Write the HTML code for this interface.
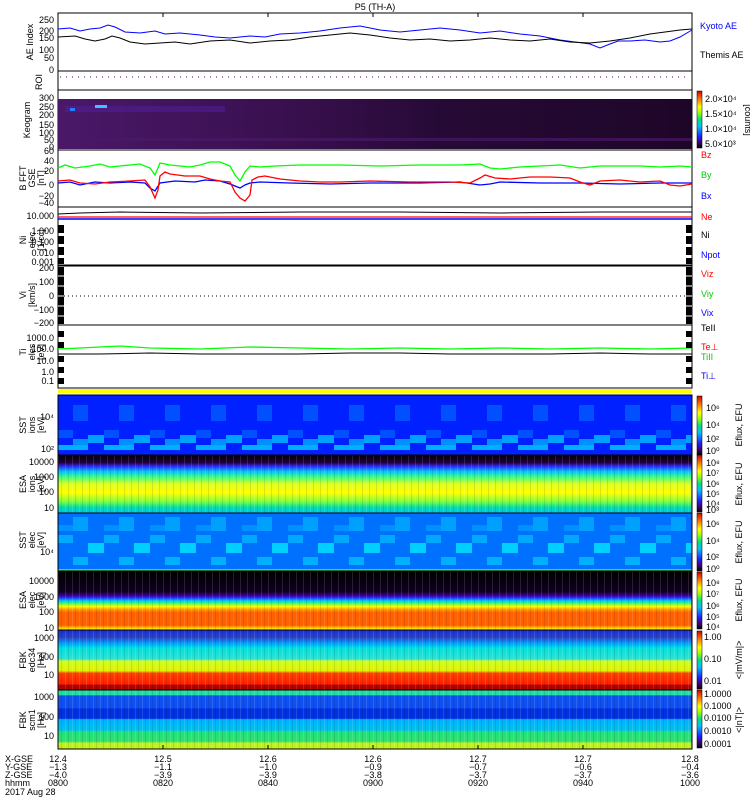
<!DOCTYPE html>
<html><head><meta charset="utf-8"><style>
html,body{margin:0;padding:0;background:#fff;}
svg{display:block;font-family:"Liberation Sans",sans-serif;}
text{font-size:9px;}
</style></head><body>
<svg width="750" height="800" viewBox="0 0 750 800" xmlns="http://www.w3.org/2000/svg">
<defs>
<linearGradient id="rb" x1="0" y1="1" x2="0" y2="0">
<stop offset="0" stop-color="#000"/><stop offset="0.08" stop-color="#400060"/><stop offset="0.2" stop-color="#2020ff"/><stop offset="0.38" stop-color="#00c0ff"/><stop offset="0.5" stop-color="#00e080"/><stop offset="0.62" stop-color="#a0ff00"/><stop offset="0.72" stop-color="#ffff00"/><stop offset="0.85" stop-color="#ff8000"/><stop offset="1" stop-color="#d00000"/>
</linearGradient>
<linearGradient id="esai" x1="0" y1="0" x2="0" y2="1">
<stop offset="0" stop-color="#000"/><stop offset="0.13" stop-color="#200040"/><stop offset="0.2" stop-color="#3030ff"/><stop offset="0.28" stop-color="#00c0ff"/><stop offset="0.38" stop-color="#40ff80"/><stop offset="0.5" stop-color="#e0ff20"/><stop offset="0.65" stop-color="#ffff00"/><stop offset="0.8" stop-color="#80ff40"/><stop offset="0.9" stop-color="#00e0a0"/><stop offset="1" stop-color="#00c0ff"/>
</linearGradient>
<linearGradient id="esae" x1="0" y1="0" x2="0" y2="1">
<stop offset="0" stop-color="#000"/><stop offset="0.35" stop-color="#100020"/><stop offset="0.42" stop-color="#4000a0"/><stop offset="0.46" stop-color="#2040ff"/><stop offset="0.5" stop-color="#00c0ff"/><stop offset="0.55" stop-color="#40ff60"/><stop offset="0.6" stop-color="#ffff00"/><stop offset="0.65" stop-color="#ffa000"/><stop offset="0.7" stop-color="#ff6000"/><stop offset="0.92" stop-color="#ff6000"/><stop offset="0.96" stop-color="#ffc000"/><stop offset="1" stop-color="#ffff00"/>
</linearGradient>
<linearGradient id="fbk1" x1="0" y1="0" x2="0" y2="1">
<stop offset="0" stop-color="#1030e0"/><stop offset="0.12" stop-color="#3040c0"/><stop offset="0.22" stop-color="#00a0ff"/><stop offset="0.3" stop-color="#00e0e0"/><stop offset="0.48" stop-color="#30e0d0"/><stop offset="0.52" stop-color="#d0ff20"/><stop offset="0.68" stop-color="#e0f000"/><stop offset="0.72" stop-color="#ff4000"/><stop offset="0.9" stop-color="#ff2000"/><stop offset="0.92" stop-color="#b00000"/><stop offset="1" stop-color="#b00000"/>
</linearGradient>
<linearGradient id="fbk2" x1="0" y1="0" x2="0" y2="1">
<stop offset="0" stop-color="#20e0a0"/><stop offset="0.08" stop-color="#20e0a0"/><stop offset="0.1" stop-color="#1050f0"/><stop offset="0.3" stop-color="#1050f0"/><stop offset="0.32" stop-color="#0030e0"/><stop offset="0.48" stop-color="#0030e0"/><stop offset="0.5" stop-color="#00b0ff"/><stop offset="0.68" stop-color="#00c0f0"/><stop offset="0.7" stop-color="#20e080"/><stop offset="0.87" stop-color="#30e070"/><stop offset="0.9" stop-color="#c0f020"/><stop offset="1" stop-color="#c0f020"/>
</linearGradient>
<linearGradient id="keo" x1="0" y1="0" x2="1" y2="0">
<stop offset="0" stop-color="#4a1868"/><stop offset="0.35" stop-color="#3a1050"/><stop offset="0.6" stop-color="#260a36"/><stop offset="1" stop-color="#1e0628"/>
</linearGradient>
<pattern id="stripes" width="7" height="60" patternUnits="userSpaceOnUse">
<rect x="2" y="0" width="1" height="60" fill="#fff" opacity="0.12"/><rect x="5" y="0" width="1" height="60" fill="#000" opacity="0.1"/>
</pattern>
<pattern id="sst1" width="46" height="60" patternUnits="userSpaceOnUse" x="58" y="395">
<rect width="46" height="60" fill="#0020ff"/>
<rect x="15" y="10" width="15" height="16" fill="#0050ff"/><rect x="0" y="35" width="15" height="8" fill="#0050ff"/><rect x="30" y="40" width="16" height="8" fill="#00a0ff"/><rect x="15" y="44" width="15" height="6" fill="#0090ff"/><rect x="0" y="50" width="30" height="5" fill="#00b0ff"/>
</pattern>
<pattern id="sst2" width="46" height="58" patternUnits="userSpaceOnUse" x="58" y="513">
<rect width="46" height="58" fill="#0070ff"/>
<rect x="15" y="4" width="15" height="14" fill="#00a0ff"/><rect x="0" y="22" width="15" height="8" fill="#00a8ff"/><rect x="30" y="30" width="16" height="10" fill="#00d0ff"/><rect x="15" y="44" width="15" height="8" fill="#00b0ff"/><rect x="0" y="12" width="15" height="6" fill="#0090ff"/>
</pattern>
</defs>

<text x="375" y="10" text-anchor="middle" font-size="10">P5 (TH-A)</text>

<!-- AE panel -->
<rect x="58" y="13" width="634" height="58" fill="#fff" stroke="#000"/>
<polyline fill="none" stroke="#00f" points="58,29 70,28 80,31 90,29 100,28 108,25 115,27 125,32 140,33 155,31 165,34 180,33 200,35 215,37 230,38 250,36 265,37 280,34 300,33 320,31 340,28 360,26 380,30 400,32 420,30 440,28 460,30 480,33 500,31 520,34 540,36 560,40 575,42 590,44 600,48 610,44 618,41 630,41 645,40 660,42 670,41 680,37 692,30"/>
<polyline fill="none" stroke="#000" points="58,37 75,36 85,39 95,41 105,39 112,36 120,38 130,42 145,44 160,43 175,42 190,44 210,41 230,40 250,43 270,41 290,40 310,37 330,35 350,33 370,35 390,38 410,40 430,39 450,41 470,40 490,38 510,40 530,41 550,39 570,42 590,43 610,41 630,38 650,34 665,32 680,30 692,29"/>
<g font-size="9">
<text x="54" y="23" text-anchor="end">250</text><text x="54" y="34" text-anchor="end">200</text><text x="54" y="41" text-anchor="end">150</text><text x="54" y="53" text-anchor="end">100</text><text x="54" y="61" text-anchor="end">50</text><text x="54" y="73" text-anchor="end">0</text>
<text transform="translate(33,42) rotate(-90)" text-anchor="middle">AE Index</text>
</g>
<text x="700" y="29" fill="#00f">Kyoto AE</text><text x="700" y="58">Themis AE</text>

<!-- ROI -->
<rect x="58" y="71" width="634" height="19" fill="#fff" stroke="#000"/>
<line x1="60" y1="77" x2="690" y2="77" stroke="#400060" stroke-dasharray="1,5"/>
<text transform="translate(42,82) rotate(-90)" text-anchor="middle">ROI</text>

<!-- Keogram -->
<rect x="58" y="90" width="634" height="60" fill="#fff" stroke="#000"/>
<rect x="58" y="99" width="634" height="50" fill="url(#keo)"/>
<rect x="65" y="106" width="160" height="6" fill="#5020a0" opacity="0.5"/>
<rect x="95" y="105" width="12" height="3" fill="#40c0ff"/>
<rect x="70" y="108" width="5" height="3" fill="#2080ff"/>
<rect x="58" y="138" width="634" height="3" fill="#4a1868" opacity="0.7"/>
<text x="54" y="101" text-anchor="end">300</text><text x="54" y="110" text-anchor="end">250</text><text x="54" y="118" text-anchor="end">200</text><text x="54" y="128" text-anchor="end">150</text><text x="54" y="136" text-anchor="end">100</text><text x="54" y="143" text-anchor="end">50</text><text x="54" y="150" text-anchor="end">0</text>
<text transform="translate(30,120) rotate(-90)" text-anchor="middle">Keogram</text>
<rect x="697" y="91" width="5" height="57" fill="url(#rb)" stroke="#000" stroke-width="0.5"/>
<g font-size="8"><text x="705" y="102">2.0×10⁴</text><text x="705" y="117">1.5×10⁴</text><text x="705" y="132">1.0×10⁴</text><text x="705" y="147">5.0×10³</text></g>
<text transform="translate(745,120) rotate(90)" text-anchor="middle" font-size="8">[counts]</text>

<!-- B FFT -->
<rect x="58" y="150" width="634" height="57" fill="#fff" stroke="#000"/>
<polyline fill="none" stroke="#0f0" stroke-width="1.3" points="58,168 65,165 75,168 90,166 100,164 110,167 120,166 130,165 140,164 150,168 155,175 160,163 170,165 190,167 200,165 210,162 220,162 230,166 235,175 240,181 245,172 250,166 260,167 275,166 300,165 340,165 380,166 420,165 460,165 480,164 490,168 500,169 520,167 540,166 560,165 580,168 600,166 620,166 640,166 660,167 680,166 692,167"/>
<polyline fill="none" stroke="#00f" stroke-width="1.3" points="58,183 70,182 80,185 95,182 110,183 130,182 145,183 150,188 155,191 160,183 175,181 195,182 205,180 220,181 230,184 240,188 245,185 250,183 260,182 290,183 330,184 370,183 420,183 460,182 480,185 490,184 500,182 540,183 580,183 620,184 660,183 692,183"/>
<polyline fill="none" stroke="#f00" stroke-width="1.3" points="58,181 70,180 80,183 95,184 110,182 130,181 145,180 150,187 155,198 158,190 160,176 165,172 170,174 185,176 200,176 210,179 220,181 230,182 235,192 240,198 245,201 250,195 252,180 258,177 265,176 280,179 300,181 320,182 340,182 370,181 410,182 450,182 470,183 480,178 485,175 495,178 510,179 530,177 550,177 570,178 580,182 590,185 600,181 620,180 640,182 660,181 670,185 680,186 692,184"/>
<g font-size="9"><text x="54" y="154" text-anchor="end">60</text><text x="54" y="164" text-anchor="end">40</text><text x="54" y="174" text-anchor="end">20</text><text x="54" y="188" text-anchor="end">0</text><text x="54" y="199" text-anchor="end">−20</text><text x="54" y="206" text-anchor="end">−40</text></g>
<text transform="translate(26,178) rotate(-90)" text-anchor="middle" font-size="8">B FFT</text>
<text transform="translate(35,178) rotate(-90)" text-anchor="middle" font-size="8">GSE</text>
<text transform="translate(44,178) rotate(-90)" text-anchor="middle" font-size="8">[nT]</text>
<text x="701" y="158" fill="#f00">Bz</text><text x="701" y="178" fill="#0c0">By</text><text x="701" y="199" fill="#00f">Bx</text>

<!-- Ni -->
<rect x="58" y="207" width="634" height="58" fill="#fff" stroke="#000"/>
<polyline fill="none" stroke="#000" points="58,214 80,213 120,212 200,213 300,212 400,212 500,213 600,212 692,212"/>
<line x1="58" y1="219" x2="692" y2="219" stroke="#00f" stroke-width="1.5"/>
<line x1="58" y1="217" x2="692" y2="217" stroke="#f00" stroke-width="1.3"/>
<g font-size="9"><text x="54" y="219" text-anchor="end">10.000</text><text x="54" y="234" text-anchor="end">1.000</text><text x="54" y="245" text-anchor="end">0.100</text><text x="54" y="256" text-anchor="end">0.010</text><text x="54" y="265" text-anchor="end">0.001</text></g>
<text transform="translate(26,240) rotate(-90)" text-anchor="middle" font-size="8">Ni</text>
<text transform="translate(35,240) rotate(-90)" text-anchor="middle" font-size="8">elec</text>
<text transform="translate(44,240) rotate(-90)" text-anchor="middle" font-size="8">[1/cc]</text>
<text x="701" y="220" fill="#f00">Ne</text><text x="701" y="238">Ni</text><text x="701" y="258" fill="#00f">Npot</text>

<!-- Vi -->
<rect x="58" y="266" width="634" height="59" fill="#fff" stroke="#000"/>
<line x1="60" y1="296" x2="690" y2="296" stroke="#000" stroke-dasharray="1,3"/>
<g font-size="9"><text x="54" y="271" text-anchor="end">200</text><text x="54" y="285" text-anchor="end">100</text><text x="54" y="299" text-anchor="end">0</text><text x="54" y="313" text-anchor="end">−100</text><text x="54" y="326" text-anchor="end">−200</text></g>
<text transform="translate(26,295) rotate(-90)" text-anchor="middle" font-size="8">Vi</text>
<text transform="translate(35,295) rotate(-90)" text-anchor="middle" font-size="8">[km/s]</text>
<text x="701" y="277" fill="#f00">Viz</text><text x="701" y="297" fill="#0c0">Viy</text><text x="701" y="316" fill="#00f">Vix</text>

<!-- Ti -->
<rect x="58" y="325" width="634" height="63" fill="#fff" stroke="#000"/>
<polyline fill="none" stroke="#0f0" stroke-width="1.3" points="58,349 80,348 100,347 120,346 150,348 200,349 250,347 300,348 350,349 400,348 450,349 500,348 550,349 600,348 650,349 692,348"/>
<polyline fill="none" stroke="#000" points="58,354 100,354 150,353 200,354 250,354 300,354 350,353 400,353 450,354 500,354 550,354 600,353 650,354 692,354"/>
<g font-size="9"><text x="54" y="341" text-anchor="end">1000.0</text><text x="54" y="352" text-anchor="end">100.0</text><text x="54" y="364" text-anchor="end">10.0</text><text x="54" y="375" text-anchor="end">1.0</text><text x="54" y="384" text-anchor="end">0.1</text></g>
<text transform="translate(26,352) rotate(-90)" text-anchor="middle" font-size="8">Ti</text>
<text transform="translate(35,352) rotate(-90)" text-anchor="middle" font-size="8">eles</text>
<text transform="translate(44,352) rotate(-90)" text-anchor="middle" font-size="8">[eV]</text>
<text x="701" y="331">TeII</text><text x="701" y="350" fill="#f00">Te⊥</text><text x="701" y="360" fill="#0c0">TiII</text><text x="701" y="379" fill="#00f">Ti⊥</text>

<!-- axis tick blocks (left/right) -->
<g fill="#000">
<rect x="58" y="225" width="6" height="8"/><rect x="58" y="236" width="6" height="8"/><rect x="58" y="247" width="6" height="8"/><rect x="58" y="258" width="6" height="6"/>
<rect x="686" y="225" width="6" height="8"/><rect x="686" y="236" width="6" height="8"/><rect x="686" y="247" width="6" height="8"/><rect x="686" y="258" width="6" height="6"/>
<rect x="58" y="267" width="6" height="57"/><rect x="686" y="267" width="6" height="57"/>
<rect x="58" y="331" width="6" height="6"/><rect x="58" y="342" width="6" height="6"/><rect x="58" y="356" width="6" height="6"/><rect x="58" y="367" width="6" height="6"/><rect x="58" y="378" width="6" height="6"/>
<rect x="686" y="331" width="6" height="6"/><rect x="686" y="342" width="6" height="6"/><rect x="686" y="356" width="6" height="6"/><rect x="686" y="367" width="6" height="6"/><rect x="686" y="378" width="6" height="6"/>
</g>
<g stroke="#fff" stroke-width="1">
<line x1="58" y1="276" x2="64" y2="276"/><line x1="58" y1="286" x2="64" y2="286"/><line x1="58" y1="296" x2="64" y2="296"/><line x1="58" y1="306" x2="64" y2="306"/><line x1="58" y1="316" x2="64" y2="316"/>
<line x1="686" y1="276" x2="692" y2="276"/><line x1="686" y1="286" x2="692" y2="286"/><line x1="686" y1="296" x2="692" y2="296"/><line x1="686" y1="306" x2="692" y2="306"/><line x1="686" y1="316" x2="692" y2="316"/>
</g>

<!-- yellow band -->
<rect x="58" y="389" width="634" height="4" fill="#ffff00"/>

<!-- SST ion -->
<rect x="58" y="395" width="634" height="60" fill="url(#sst1)"/>
<rect x="58" y="395" width="634" height="60" fill="none" stroke="#000"/>
<text x="54" y="420" text-anchor="end">10⁴</text><text x="54" y="452" text-anchor="end">10²</text>
<text transform="translate(26,425) rotate(-90)" text-anchor="middle" font-size="8">SST</text>
<text transform="translate(35,425) rotate(-90)" text-anchor="middle" font-size="8">ions</text>
<text transform="translate(44,425) rotate(-90)" text-anchor="middle" font-size="8">[eV]</text>

<!-- ESA ion -->
<rect x="58" y="455" width="634" height="58" fill="url(#esai)"/>
<rect x="58" y="455" width="634" height="58" fill="url(#stripes)"/>
<rect x="58" y="455" width="634" height="58" fill="none" stroke="#000"/>
<g font-size="9"><text x="54" y="465" text-anchor="end">10000</text><text x="54" y="480" text-anchor="end">1000</text><text x="54" y="495" text-anchor="end">100</text><text x="54" y="511" text-anchor="end">10</text></g>
<text transform="translate(26,484) rotate(-90)" text-anchor="middle" font-size="8">ESA</text>
<text transform="translate(35,484) rotate(-90)" text-anchor="middle" font-size="8">ions</text>
<text transform="translate(44,484) rotate(-90)" text-anchor="middle" font-size="8">[eV]</text>

<!-- SST elec -->
<rect x="58" y="513" width="634" height="58" fill="url(#sst2)"/>
<rect x="58" y="569" width="634" height="2" fill="#40e040"/>
<rect x="58" y="513" width="634" height="58" fill="none" stroke="#000"/>
<text x="54" y="555" text-anchor="end">10⁴</text>
<text transform="translate(26,540) rotate(-90)" text-anchor="middle" font-size="8">SST</text>
<text transform="translate(35,540) rotate(-90)" text-anchor="middle" font-size="8">elec</text>
<text transform="translate(44,540) rotate(-90)" text-anchor="middle" font-size="8">[eV]</text>

<!-- ESA elec -->
<rect x="58" y="571" width="634" height="59" fill="url(#esae)"/>
<rect x="58" y="571" width="634" height="59" fill="url(#stripes)"/>
<rect x="58" y="571" width="634" height="59" fill="none" stroke="#000"/>
<g font-size="9"><text x="54" y="584" text-anchor="end">10000</text><text x="54" y="600" text-anchor="end">1000</text><text x="54" y="615" text-anchor="end">100</text><text x="54" y="631" text-anchor="end">10</text></g>
<text transform="translate(26,600) rotate(-90)" text-anchor="middle" font-size="8">ESA</text>
<text transform="translate(35,600) rotate(-90)" text-anchor="middle" font-size="8">elec</text>
<text transform="translate(44,600) rotate(-90)" text-anchor="middle" font-size="8">[eV]</text>

<!-- FBK1 -->
<rect x="58" y="630" width="634" height="60" fill="url(#fbk1)"/>
<rect x="58" y="630" width="634" height="60" fill="url(#stripes)"/>
<rect x="58" y="630" width="634" height="60" fill="none" stroke="#000"/>
<g font-size="9"><text x="54" y="641" text-anchor="end">1000</text><text x="54" y="660" text-anchor="end">100</text><text x="54" y="678" text-anchor="end">10</text></g>
<text transform="translate(26,660) rotate(-90)" text-anchor="middle" font-size="8">FBK</text>
<text transform="translate(35,660) rotate(-90)" text-anchor="middle" font-size="8">edc34</text>
<text transform="translate(44,660) rotate(-90)" text-anchor="middle" font-size="8">[Hz]</text>

<!-- FBK2 -->
<rect x="58" y="690" width="634" height="59" fill="url(#fbk2)"/>
<rect x="58" y="690" width="634" height="59" fill="url(#stripes)"/>
<rect x="58" y="690" width="634" height="59" fill="none" stroke="#000"/>
<g font-size="9"><text x="54" y="700" text-anchor="end">1000</text><text x="54" y="720" text-anchor="end">100</text><text x="54" y="739" text-anchor="end">10</text></g>
<text transform="translate(26,720) rotate(-90)" text-anchor="middle" font-size="8">FBK</text>
<text transform="translate(35,720) rotate(-90)" text-anchor="middle" font-size="8">scm1</text>
<text transform="translate(44,720) rotate(-90)" text-anchor="middle" font-size="8">[Hz]</text>

<!-- colorbars -->
<rect x="697" y="396" width="5" height="59" fill="url(#rb)" stroke="#000" stroke-width="0.5"/>
<rect x="697" y="455" width="5" height="57" fill="url(#rb)" stroke="#000" stroke-width="0.5"/>
<rect x="697" y="513" width="5" height="58" fill="url(#rb)" stroke="#000" stroke-width="0.5"/>
<rect x="697" y="572" width="5" height="57" fill="url(#rb)" stroke="#000" stroke-width="0.5"/>
<rect x="697" y="631" width="5" height="58" fill="url(#rb)" stroke="#000" stroke-width="0.5"/>
<rect x="697" y="690" width="5" height="58" fill="url(#rb)" stroke="#000" stroke-width="0.5"/>
<g font-size="7">
<text x="706" y="411">10⁶</text><text x="706" y="428">10⁴</text><text x="706" y="442">10²</text><text x="706" y="454">10⁰</text>
<text x="706" y="466">10⁸</text><text x="706" y="476">10⁷</text><text x="706" y="487">10⁶</text><text x="706" y="497">10⁵</text><text x="706" y="507">10⁴</text><text x="706" y="513">10³</text>
<text x="706" y="527">10⁶</text><text x="706" y="544">10⁴</text><text x="706" y="560">10²</text><text x="706" y="572">10⁰</text>
<text x="706" y="586">10⁸</text><text x="706" y="597">10⁷</text><text x="706" y="609">10⁶</text><text x="706" y="620">10⁵</text><text x="706" y="630">10⁴</text>
<text x="704" y="640">1.00</text><text x="704" y="662">0.10</text><text x="704" y="684">0.01</text>
<text x="704" y="697">1.0000</text><text x="704" y="709">0.1000</text><text x="704" y="721">0.0100</text><text x="704" y="734">0.0010</text><text x="704" y="747">0.0001</text>
</g>
<g font-size="8">
<text transform="translate(742,425) rotate(-90)" text-anchor="middle">Eflux, EFU</text>
<text transform="translate(742,484) rotate(-90)" text-anchor="middle">Eflux, EFU</text>
<text transform="translate(742,542) rotate(-90)" text-anchor="middle">Eflux, EFU</text>
<text transform="translate(742,600) rotate(-90)" text-anchor="middle">Eflux, EFU</text>
<text transform="translate(742,660) rotate(-90)" text-anchor="middle">&lt;|mV/m|&gt;</text>
<text transform="translate(742,720) rotate(-90)" text-anchor="middle">&lt;|nT|&gt;</text>
</g>

<!-- x ticks -->
<g stroke="#000">
<line x1="163" y1="13" x2="163" y2="17"/><line x1="268" y1="13" x2="268" y2="17"/><line x1="373" y1="13" x2="373" y2="17"/><line x1="478" y1="13" x2="478" y2="17"/><line x1="583" y1="13" x2="583" y2="17"/>
<line x1="163" y1="745" x2="163" y2="749"/><line x1="268" y1="745" x2="268" y2="749"/><line x1="373" y1="745" x2="373" y2="749"/><line x1="478" y1="745" x2="478" y2="749"/><line x1="583" y1="745" x2="583" y2="749"/>
</g>
<g font-size="9">
<text x="5" y="762">X-GSE</text><text x="5" y="770">Y-GSE</text><text x="5" y="778">Z-GSE</text><text x="5" y="786">hhmm</text><text x="5" y="795">2017 Aug 28</text>
<g text-anchor="middle">
<text x="58" y="762">12.4</text><text x="58" y="770">−1.3</text><text x="58" y="778">−4.0</text><text x="58" y="786">0800</text>
<text x="163" y="762">12.5</text><text x="163" y="770">−1.1</text><text x="163" y="778">−3.9</text><text x="163" y="786">0820</text>
<text x="268" y="762">12.6</text><text x="268" y="770">−1.0</text><text x="268" y="778">−3.9</text><text x="268" y="786">0840</text>
<text x="373" y="762">12.6</text><text x="373" y="770">−0.9</text><text x="373" y="778">−3.8</text><text x="373" y="786">0900</text>
<text x="478" y="762">12.7</text><text x="478" y="770">−0.7</text><text x="478" y="778">−3.7</text><text x="478" y="786">0920</text>
<text x="583" y="762">12.7</text><text x="583" y="770">−0.6</text><text x="583" y="778">−3.7</text><text x="583" y="786">0940</text>
<text x="690" y="762">12.8</text><text x="690" y="770">−0.4</text><text x="690" y="778">−3.6</text><text x="690" y="786">1000</text>
</g></g>
</svg>
</body></html>
